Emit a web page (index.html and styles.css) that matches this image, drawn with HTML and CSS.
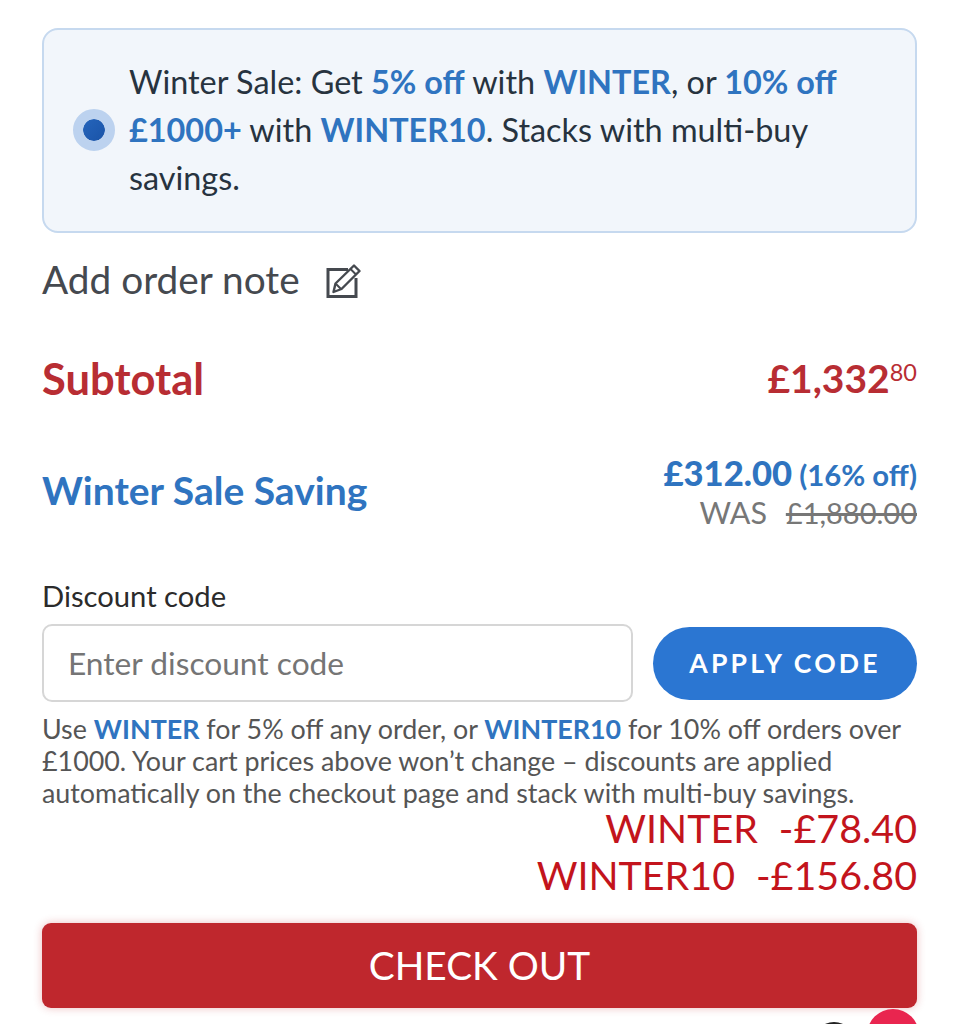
FILE: index.html
```html
<!DOCTYPE html>
<html>
    <head>
        <title>Cart</title>
        <link rel="stylesheet" href="styles.css">
    </head>
    <body>
        <div class="cart">
            <div class="banner">
                <span class="dot"></span>
                <p>Winter Sale: Get <b>5% off</b> with <b>WINTER</b>, or <b>10% off £1000+</b> with <b>WINTER10</b>. Stacks with multi-buy savings.</p>
            </div>
            <div class="note">
                <span>Add order note</span>
                <svg width="36" height="36" viewBox="0 0 36 36" fill="none" stroke="#45494f" stroke-width="3">
                    <path d="M23 6.500H3v27h28V15"/>
                    <path d="M8.500 29l2-8.500L29 2.500l5.500 5.500-18 18z" stroke-width="2.400" stroke-linejoin="round"/>
                    <path d="M25.500 6l5.500 5.500M11 21l5 5" stroke-width="2"/>
                </svg>
            </div>
            <div class="row subtotal">
                <span>Subtotal</span>
                <span class="price">£1,332<sup>80</sup></span>
            </div>
            <div class="row saving">
                <span>Winter Sale Saving</span>
                <div class="saving_price">
                    <div class="amount"><b>£312.00</b> (16% off)</div>
                    <div class="was">WAS <s>£1,880.00</s></div>
                </div>
            </div>
            <label class="code_label">Discount code</label>
            <div class="code_row">
                <input class="code_input" type="text" placeholder="Enter discount code">
                <div class="apply">APPLY CODE</div>
            </div>
            <p class="help">Use <b>WINTER</b> for 5% off any order, or <b>WINTER10</b> for 10% off orders over £1000. Your cart prices above won’t change – discounts are applied automatically on the checkout page and stack with multi-buy savings.</p>
            <div class="discounts">
                <div>WINTER<span class="gap"></span>-£78.40</div>
                <div>WINTER10<span class="gap"></span>-£156.80</div>
            </div>
            <div class="checkout">CHECK OUT</div>
        </div>
        <div class="chat_black"></div>
        <div class="chat_red"></div>
    </body>
</html>
```

FILE: styles.css
```css
html, body {
    height: 1024px;
    overflow: hidden;
}
body {
    margin: 0;
    background: #fff;
    font-family: Lato, sans-serif;
    color: #45494f;
    position: relative;
}
p {
    margin: 0;
}
.cart {
    padding: 28px 42px 0;
}
.banner {
    display: flex;
    align-items: center;
    gap: 14px;
    height: 205px;
    box-sizing: border-box;
    padding: 0 30px 2px 29px;
    background: #f2f6fb;
    border: 2px solid #c6d9ef;
    border-radius: 16px;
    font-size: 32.400px;
    line-height: 48px;
    color: #27333f;
}
.banner b, .help b, .amount {
    color: #2f74c0;
}
.dot {
    flex: none;
    width: 22px;
    height: 22px;
    border-radius: 50%;
    background: linear-gradient(135deg, #2a6cc4, #154c9f);
    background-origin: border-box;
    border: 10px solid #bcd2ef;
    background-clip: padding-box;
}
.note {
    display: flex;
    align-items: center;
    gap: 25px;
    height: 48px;
    margin-top: 24px;
    font-size: 38.800px;
}
.note span {
    padding-bottom: 4px;
}
.row {
    display: flex;
    justify-content: space-between;
    align-items: center;
}
.subtotal {
    margin-top: 46px;
    height: 54px;
    font-size: 43.500px;
    font-weight: 700;
    color: #b82d33;
}
.price {
    font-size: 39px;
}
.price sup {
    font-size: 23.500px;
    font-weight: 400;
    vertical-align: 12px;
    line-height: 0;
}
.saving {
    margin-top: 41px;
    height: 88px;
    font-size: 39px;
    font-weight: 700;
    color: #2f74c0;
}
.saving_price {
    text-align: right;
}
.amount {
    font-size: 29.300px;
    line-height: 42px;
}
.amount b {
    font-size: 34.600px;
}
.was {
    font-size: 30.500px;
    line-height: 32px;
    font-weight: 400;
    color: #777;
    word-spacing: 11px;
}
.was s {
    font-size: 29px;
    text-decoration-thickness: 3px;
}
.code_label {
    display: block;
    margin-top: 44px;
    font-size: 29.200px;
    line-height: 36px;
    color: #2b2b2b;
}
.code_row {
    display: flex;
    align-items: center;
    gap: 20px;
    margin-top: 10px;
}
.code_input {
    flex: 1;
    min-width: 0;
    height: 78px;
    box-sizing: border-box;
    padding: 0 24px;
    border: 2px solid #d6d6d6;
    border-radius: 10px;
    font-family: Lato, sans-serif;
    font-size: 31.700px;
    outline: none;
}
.code_input::placeholder {
    color: #757575;
}
.apply {
    width: 264px;
    height: 73px;
    line-height: 73px;
    text-align: center;
    border-radius: 37px;
    background: #2b76d2;
    color: #fff;
    font-size: 26.600px;
    font-weight: 700;
    letter-spacing: 3.200px;
}
.help {
    margin-top: 11px;
    font-size: 26.850px;
    line-height: 32px;
    color: #555;
}
.discounts {
    margin-top: -5px;
    text-align: right;
    font-size: 39.400px;
    line-height: 47px;
    color: #c3141c;
}
.gap {
    display: inline-block;
    width: 21px;
}
.checkout {
    margin-top: 25px;
    height: 85px;
    line-height: 85px;
    text-align: center;
    border-radius: 9px;
    background: #bf272d;
    color: #fff;
    font-size: 38.800px;
    box-shadow: 0 0 8px rgba(191, 39, 45, .3);
}
.chat_black {
    position: absolute;
    left: 812px;
    top: 1022px;
    width: 44px;
    height: 44px;
    border-radius: 50%;
    background: #222;
}
.chat_red {
    position: absolute;
    left: 867px;
    top: 1009px;
    width: 52px;
    height: 52px;
    border-radius: 50%;
    background: #e9254f;
}
```
